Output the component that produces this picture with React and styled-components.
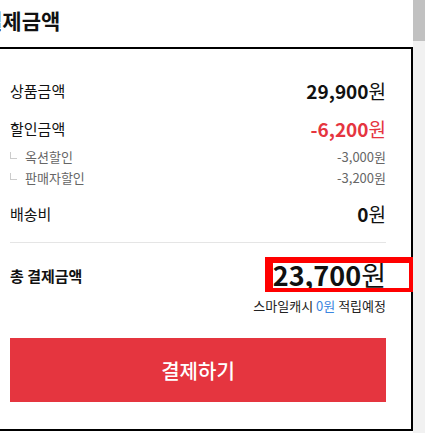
import React from "react";
import styled, { createGlobalStyle } from "styled-components";

const GlobalStyle = createGlobalStyle`
  html, body {
    margin: 0;
    height: 100%;
    overflow: hidden;
  }
  body {
    background: #fff;
    font-family: "Noto Sans CJK KR", "Noto Sans", sans-serif;
    color: #111;
  }
`;

const Page = styled.div`
  display: flex;
  height: 100vh;
`;

const Main = styled.main`
  flex: 1;
  min-width: 0;
  overflow: hidden;
  padding-top: 8px;
`;

const ScrollTrack = styled.div`
  width: 12px;
  flex: none;
  background: #f1f1f1;
`;

const ScrollThumb = styled.div`
  height: 41px;
  background: #c1c1c1;
`;

const Section = styled.section`
  margin-left: -17px;
`;

const Title = styled.h2`
  margin: 0 0 14px;
  font-size: 21px;
  line-height: 25px;
  font-weight: 700;
  color: #111;
  white-space: nowrap;
`;

const Box = styled.div`
  border: 2px solid #000;
  padding: 29px 25px 27px 25px;
`;

const Row = styled.div`
  display: flex;
  align-items: center;
  justify-content: space-between;
  height: 24px;
  margin-top: ${(p) => p.$gap || 0}px;
`;

const Label = styled.span`
  font-size: 15px;
  color: #111;
`;

const Value = styled.span`
  font-size: 19px;
  color: ${(p) => p.$color || "#111"};
  b {
    font-weight: 700;
  }
`;

const SubList = styled.ul`
  list-style: none;
  margin: 6px 0 0;
  padding: 0;
`;

const SubRow = styled.li`
  display: flex;
  align-items: center;
  justify-content: space-between;
  height: 21px;
  font-size: 13px;
  color: #666;
`;

const SubLabel = styled.span`
  display: flex;
  align-items: center;
  &::before {
    content: "";
    width: 6px;
    height: 6px;
    border-left: 1px solid #ccc;
    border-bottom: 1px solid #ccc;
    margin-right: 8px;
    margin-top: -2px;
  }
`;

const Divider = styled.hr`
  border: 0;
  border-top: 1px solid #e5e5e5;
  margin: 17px 0 0;
`;

const TotalRow = styled.div`
  display: flex;
  align-items: center;
  justify-content: space-between;
  height: 32px;
  margin-top: 16px;
`;

const TotalLabel = styled.span`
  font-size: 15px;
  font-weight: 700;
  color: #111;
`;

const TotalValue = styled.span`
  position: relative;
  font-size: 27px;
  line-height: 32px;
  color: #111;
  b {
    font-weight: 700;
  }
`;

const Highlight = styled.span`
  position: absolute;
  top: -2px;
  right: -31px;
  width: 152px;
  height: 35px;
  box-sizing: border-box;
  border-style: solid;
  border-color: #ff0000;
  border-width: 6px 8px 4px 8px;
  pointer-events: none;
`;

const Cash = styled.p`
  margin: 6px 0 0;
  text-align: right;
  font-size: 13px;
  line-height: 18px;
  color: #222;
  em {
    font-style: normal;
    color: #3b86e0;
  }
`;

const PayButton = styled.button`
  display: block;
  width: 100%;
  height: 64px;
  margin-top: 23px;
  border: 0;
  background: #e5353f;
  color: #fff;
  font-family: inherit;
  font-size: 20px;
  font-weight: 500;
  cursor: pointer;
`;

export default function App() {
  return (
    <>
      <GlobalStyle />
      <Page>
        <Main>
          <Section>
            <Title>결제금액</Title>
            <Box>
              <Row>
                <Label>상품금액</Label>
                <Value>
                  <b>29,900</b>원
                </Value>
              </Row>
              <Row $gap={14}>
                <Label>할인금액</Label>
                <Value $color="#e5353f">
                  <b>-6,200</b>원
                </Value>
              </Row>
              <SubList>
                <SubRow>
                  <SubLabel>옥션할인</SubLabel>
                  <span>-3,000원</span>
                </SubRow>
                <SubRow>
                  <SubLabel>판매자할인</SubLabel>
                  <span>-3,200원</span>
                </SubRow>
              </SubList>
              <Row $gap={13}>
                <Label>배송비</Label>
                <Value>
                  <b>0</b>원
                </Value>
              </Row>
              <Divider />
              <TotalRow>
                <TotalLabel>총 결제금액</TotalLabel>
                <TotalValue>
                  <b>23,700</b>원
                  <Highlight />
                </TotalValue>
              </TotalRow>
              <Cash>
                스마일캐시 <em>0원</em> 적립예정
              </Cash>
              <PayButton>결제하기</PayButton>
            </Box>
          </Section>
        </Main>
        <ScrollTrack>
          <ScrollThumb />
        </ScrollTrack>
      </Page>
    </>
  );
}
